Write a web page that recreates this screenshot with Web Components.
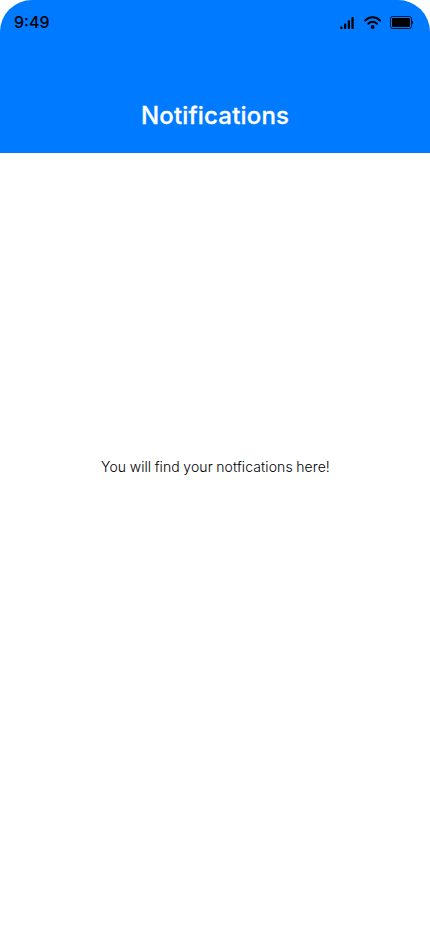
<!DOCTYPE html>
<html lang="en"><head><meta charset="utf-8"><title>Notifications</title>
<style>html,body{margin:0;height:100%;background:#fff;font-family:Inter,sans-serif}</style></head><body>
<notifications-screen></notifications-screen>
<script>
const define=(name,html)=>{const t=document.createElement('template');t.innerHTML=html;
customElements.define(name,class extends HTMLElement{constructor(){super();this.attachShadow({mode:'open'}).append(t.content.cloneNode(true));}});};
define('signal-icon',`<style>:host{display:block;width:14px;height:12px}svg{display:block}</style>
<svg width="14" height="12"><rect x=".3" y="9.4" width="2.3" height="2.6" rx=".8"/><rect x="4" y="6.5" width="2.2" height="5.5" rx=".7"/><rect x="7.8" y="3.2" width="2.2" height="8.8" rx=".7"/><rect x="11.4" y="0" width="2.3" height="12" rx=".7"/></svg>`);
define('wifi-icon',`<style>:host{display:block;width:18px;height:13px}svg{display:block}</style>
<svg width="18" height="13" viewBox="0 0 18 13" fill="none" stroke="#000" stroke-width="2" stroke-linecap="round"><path d="M1.2 4.5C5.4.3 11.8.3 16 4.5"/><path d="M4.2 7.8C6.7 5.2 10.5 5.2 13 7.8"/><circle cx="8.6" cy="11" r="1.9" fill="#000" stroke="none"/></svg>`);
define('battery-icon',`<style>:host{display:block;width:24px;height:13px}svg{display:block}</style>
<svg width="24" height="13"><rect x=".5" y=".5" width="21" height="12" rx="2" fill="none" stroke="#000" stroke-opacity=".8"/><rect x="2" y="2" width="18" height="9" rx=".8"/><path d="M22 4.5Q24.2 6.5 22 8.5z"/></svg>`);
define('status-bar',`<style>:host{display:flex;justify-content:space-between;align-items:center;height:45px;padding:0 16px 0 14px;font-size:16px;font-weight:500;color:#000}span{line-height:20px;padding-bottom:2px}.i{display:flex;align-items:center;gap:9px}signal-icon{margin-right:1px}wifi-icon{margin-right:-1px}</style>
<span>9:49</span><div class="i"><signal-icon></signal-icon><wifi-icon></wifi-icon><battery-icon></battery-icon></div>`);
define('page-header',`<style>:host{display:flex;flex-direction:column;height:153px;background:#007aff;border-radius:32px 32px 0 0}h1{margin:56px 0 0;font-size:24px;line-height:30px;font-weight:500;letter-spacing:.18px;-webkit-text-stroke:.3px #fff;color:#fff;text-align:center}</style>
<status-bar></status-bar><h1><slot></slot></h1>`);
define('empty-state',`<style>:host{display:flex;flex:1;justify-content:center;padding:305px 0 0 1px;font-size:14px;line-height:18px;font-weight:300;letter-spacing:.1px;word-spacing:-.6px;color:#000}</style><slot></slot>`);
define('notifications-screen',`<style>:host{display:flex;flex-direction:column;height:932px;box-sizing:border-box;overflow:hidden}</style><page-header>Notifications</page-header><empty-state>You will find your notfications here!</empty-state>`);
</script></body></html>
